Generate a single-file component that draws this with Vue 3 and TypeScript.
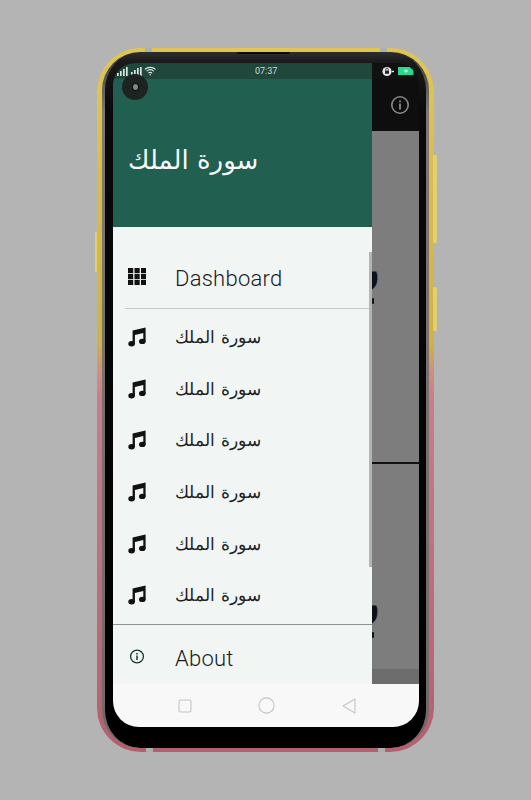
<template>
  <main class="page">
    <div class="phone">
      <span class="btn btn-left"></span>
      <span class="btn btn-right-a"></span>
      <span class="btn btn-right-b"></span>
      <span class="notch notch-tl"></span>
      <span class="notch notch-tr"></span>
      <span class="notch notch-bl"></span>
      <span class="notch notch-br"></span>
      <div class="bezel">
        <span class="earpiece"></span>
        <div class="screen">
          <div class="status">
            <div class="status-left">
              <svg class="signal" width="26" height="10" viewBox="0 0 26 10">
                <g fill="#d8e4df">
                  <rect v-for="b in bars" :key="b.x" :x="b.x" :y="10 - b.h" width="1.7" :height="b.h" />
                </g>
              </svg>
              <svg class="wifi" width="13" height="10" viewBox="0 0 13 10" fill="none" stroke="#e3ebe8" stroke-width="1.1">
                <path d="M.8 3.4a8.2 8.2 0 0 1 10.8 0M2.6 5.2a5.6 5.6 0 0 1 7.2 0M4.4 7a3 3 0 0 1 3.6 0" />
                <circle cx="6.2" cy="8.8" r=".7" fill="#e3ebe8" stroke="none" />
              </svg>
              <span class="time">07:37</span>
            </div>
            <div class="status-right">
              <svg width="12" height="11" viewBox="0 0 12 11">
                <circle cx="5" cy="5.5" r="4.6" fill="#e8e8e8" />
                <rect x="3" y="4.6" width="4" height="3.2" fill="#222" />
                <path d="M3.8 4.6V3.4a1.2 1.2 0 0 1 2.4 0v1.2" fill="none" stroke="#222" stroke-width=".8" />
                <rect x="10" y="4.8" width="2" height="1.4" fill="#e8e8e8" />
              </svg>
              <svg width="16" height="8" viewBox="0 0 16 8">
                <path d="M0 0H12.5L15.5 3V8H0Z" fill="#25d98f" />
                <path d="M6 4H10M8 2.4V5.6" stroke="#eafff5" stroke-width="1.2" />
              </svg>
            </div>
          </div>

          <div class="camera"><span></span></div>

          <div class="body">
            <aside class="drawer">
              <header class="drawer-head">
                <h1>سورة الملك</h1>
              </header>
              <div class="menu">
                <span class="scrollbar"></span>
                <div class="row row-dash">
                  <svg class="icon icon-grid" width="18" height="17" viewBox="0 0 18 17" fill="#111">
                    <template v-for="y in [0, 6, 12]" :key="y">
                      <rect v-for="x in [0, 6.5, 13]" :key="x" :x="x" :y="y" width="5.2" height="5.2" />
                    </template>
                  </svg>
                  <span class="label">Dashboard</span>
                </div>
                <hr class="line line-short" />
                <div class="tracks">
                  <div v-for="n in 6" :key="n" class="row row-track">
                    <svg class="icon" width="18" height="20" viewBox="0 0 18 20" fill="#111">
                      <path d="M4.6 3.6 17.6.6V14.4H15.3V6L6.9 8V17H4.6Z" />
                      <ellipse cx="3.6" cy="16.8" rx="3.3" ry="2.7" />
                      <ellipse cx="14.3" cy="14.4" rx="3.3" ry="2.7" />
                    </svg>
                    <span class="label label-ar">سورة الملك</span>
                  </div>
                </div>
                <hr class="line" />
                <div class="row row-about">
                  <svg class="icon icon-info" width="18" height="17" viewBox="0 0 18 17">
                    <circle cx="9" cy="8.5" r="6.4" fill="none" stroke="#12382e" stroke-width="1.3" />
                    <path d="M9 7.6V12M9 5V6.4" stroke="#12382e" stroke-width="1.5" />
                  </svg>
                  <span class="label">About</span>
                </div>
              </div>
            </aside>

            <section class="behind">
              <div class="appbar">
                <svg width="20" height="20" viewBox="0 0 20 20">
                  <circle cx="10" cy="10" r="8.2" fill="none" stroke="#8a8a8a" stroke-width="1.6" />
                  <path d="M10 8.6V14.4M10 5.4V7.2" stroke="#8a8a8a" stroke-width="1.8" />
                </svg>
              </div>
              <div class="card card-a"><span class="glyph">ر</span><i class="dot"></i></div>
              <div class="card card-b"><span class="glyph">ر</span><i class="dot"></i></div>
              <div class="card-foot"></div>
            </section>
          </div>

          <nav class="navbar">
            <svg width="14" height="14" viewBox="0 0 14 14" fill="none" stroke="#c4c4c4" stroke-width="1.1">
              <rect x="1" y="1" width="12" height="12" rx="1.5" />
            </svg>
            <svg class="nav-home" width="17" height="17" viewBox="0 0 17 17" fill="none" stroke="#c4c4c4" stroke-width="1.1">
              <circle cx="8.5" cy="8.5" r="7.6" />
            </svg>
            <svg width="14" height="16" viewBox="0 0 14 16" fill="none" stroke="#c4c4c4" stroke-width="1.1">
              <path d="M13 1V15L1 8Z" stroke-linejoin="round" />
            </svg>
          </nav>
        </div>
      </div>
    </div>
  </main>
</template>

<script setup lang="ts">
type Bar = { x: number; h: number };

// two signal groups in the status bar
const bars: Bar[] = [
  { x: 0, h: 3 },
  { x: 3, h: 5 },
  { x: 6, h: 7 },
  { x: 9, h: 9 },
  { x: 14, h: 4 },
  { x: 17, h: 6 },
  { x: 20, h: 8 },
  { x: 23, h: 9 },
];
</script>

<style>
html,
body {
  margin: 0;
  background: #b4b4b4;
  overflow: hidden;
}
</style>

<style scoped>
.page {
  width: 531px;
  height: 800px;
  box-sizing: border-box;
  padding: 48px 0 0 97px;
  background: #b4b4b4;
  font-family: Roboto, "DejaVu Sans", sans-serif;
}
.phone {
  position: relative;
  width: 337px;
  height: 704px;
  box-sizing: border-box;
  padding: 4px 5px;
  border-radius: 44px;
  background: linear-gradient(180deg, #dfc654 0%, #cdb244 42%, #cf8f80 46%, #c77d8a 50%, #b2606f 100%);
}
.btn {
  position: absolute;
  width: 4px;
  border-radius: 1px;
  background: #e0cf78;
}
.btn-left {
  left: -2px;
  top: 184px;
  height: 40px;
  width: 2px;
}
.btn-right-a {
  right: -3px;
  top: 107px;
  height: 88px;
}
.btn-right-b {
  right: -3px;
  top: 239px;
  height: 44px;
}
.notch {
  position: absolute;
  width: 7px;
  height: 4px;
  background: #aeb0ae;
}
.notch-tl {
  top: 0;
  left: 48px;
}
.notch-tr {
  top: 0;
  right: 47px;
}
.notch-bl {
  bottom: 0;
  left: 49px;
}
.notch-br {
  bottom: 0;
  right: 49px;
}
.bezel {
  position: relative;
  width: 100%;
  height: 100%;
  box-sizing: border-box;
  padding: 11px 7px 21px 8px;
  border: solid transparent;
  border-width: 0 3px;
  border-radius: 38px;
  background:
    linear-gradient(180deg, #2e2e2e 0, #1a1a1a 10px, #0a0a0a 60px, #000 100%) padding-box,
    linear-gradient(180deg, #3a3a3a 0, #7d7873 60px, #6f6868 100%) border-box;
}
.earpiece {
  position: absolute;
  left: 132px;
  top: 0;
  width: 53px;
  height: 2px;
  border-radius: 0 0 2px 2px;
  background: #0c0c0c;
}
.screen {
  position: relative;
  display: flex;
  flex-direction: column;
  width: 306px;
  height: 664px;
  overflow: hidden;
  border-radius: 22px 22px 26px 26px;
  background: #111;
}
.status {
  display: flex;
  height: 16px;
  flex: none;
}
.status-left {
  display: flex;
  align-items: center;
  width: 259px;
  box-sizing: border-box;
  padding-left: 4px;
  background: #1f473c;
}
.signal {
  margin-right: 1px;
}
.time {
  margin-left: 98px;
  font-size: 9px;
  color: #cfdcd7;
}
.status-right {
  display: flex;
  flex: 1;
  align-items: center;
  gap: 4px;
  padding-left: 10px;
  background: #111;
}
.camera {
  position: absolute;
  left: 9px;
  top: 11px;
  display: flex;
  align-items: center;
  justify-content: center;
  width: 26px;
  height: 26px;
  border-radius: 50%;
  background: #1d2320;
}
.camera span {
  width: 5px;
  height: 6px;
  border-radius: 50%;
  background: #7d8a86;
  border: 1px solid #0b0b0b;
}
.body {
  display: flex;
  flex: 1;
  min-height: 0;
}
.drawer {
  display: flex;
  flex-direction: column;
  width: 259px;
  flex: none;
}
.drawer-head {
  display: flex;
  align-items: center;
  height: 148px;
  flex: none;
  box-sizing: border-box;
  padding: 14px 0 0 15px;
  background: #215f50;
}
.drawer-head h1 {
  margin: 0;
  font-family: "DejaVu Sans", sans-serif;
  font-size: 26px;
  font-weight: 400;
  line-height: 1;
  color: #f6fbf9;
}
.menu {
  position: relative;
  flex: 1;
  overflow: hidden;
  background: #f1f6f5;
}
.scrollbar {
  position: absolute;
  right: 0;
  top: 25px;
  width: 3px;
  height: 315px;
  background: #b2b5b4;
}
.row {
  display: flex;
  align-items: center;
  padding-left: 15px;
}
.row-dash {
  height: 81px;
  padding-top: 21px;
  box-sizing: border-box;
}
.row-track {
  height: 51.7px;
}
.row-about {
  height: 60px;
  box-sizing: border-box;
  padding-top: 6px;
}
.icon {
  flex: none;
  margin-right: 29px;
}
.icon-grid {
  margin-top: -3px;
}
.icon-info {
  margin-top: -4px;
}
.label {
  font-size: 22px;
  font-weight: 300;
  letter-spacing: 0.25px;
  color: #1a1a1a;
}
.label-ar {
  font-family: "DejaVu Sans", sans-serif;
  font-size: 17.4px;
  letter-spacing: 0;
  color: #222;
}
.line {
  height: 1px;
  margin: 0;
  border: 0;
  background: #8f9492;
}
.line-short {
  margin: 0 3px 0 12px;
  background: #c6cbc9;
}
.tracks {
  padding: 2px 0 3px;
}
.behind {
  display: flex;
  flex: 1;
  flex-direction: column;
  min-width: 0;
}
.appbar {
  display: flex;
  align-items: center;
  justify-content: center;
  height: 52px;
  flex: none;
  padding-left: 8px;
  background: #0e0e0e;
}
.card {
  box-sizing: border-box;
  overflow: hidden;
  background: #7d7d7d;
}
.glyph {
  display: block;
  margin-left: -17px;
  font-family: "DejaVu Sans", sans-serif;
  font-size: 44px;
  font-weight: 700;
  line-height: 48px;
  color: #111;
}
.dot {
  display: block;
  width: 2px;
  height: 6px;
  margin-top: 6px;
  border-radius: 1px;
  background: #111;
}
.card-a {
  height: 332px;
  padding-top: 113px;
  border-bottom: 1px solid #111;
}
.card-b {
  height: 205px;
  margin-top: 1px;
  padding-top: 114px;
}
.card-foot {
  flex: 1;
  background: #6d6d6d;
}
.navbar {
  display: flex;
  align-items: center;
  justify-content: space-between;
  height: 43px;
  flex: none;
  box-sizing: border-box;
  padding: 0 63px 0 65px;
  background: #f8f8f8;
}
.nav-home {
  margin-left: -2px;
}
</style>
